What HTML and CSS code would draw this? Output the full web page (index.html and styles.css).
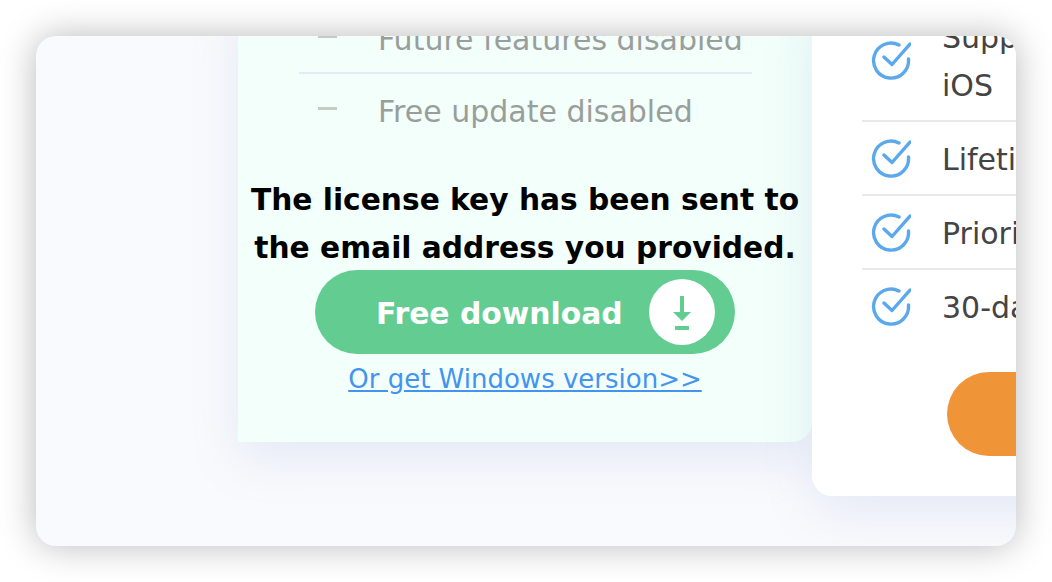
FILE: index.html
```html
<!DOCTYPE html>
<html lang="en">
<head>
<meta charset="utf-8">
<title>Free download</title>
<link rel="stylesheet" href="styles.css">
</head>
<body>
<main class="window">
  <div class="cards">
    <section class="card card-free">
      <ul class="list list-free">
        <li class="row-free"><span class="dash"></span><span>Future features disabled</span></li>
        <li class="row-free"><span class="dash"></span><span>Free update disabled</span></li>
      </ul>
      <p class="notice">The license key has been sent to<br>the email address you provided.</p>
      <a class="btn-download" href="#">
        <span>Free download</span>
        <svg class="download-icon" viewBox="0 0 66 66" aria-hidden="true">
          <circle cx="33" cy="33" r="33" fill="#fff"/>
          <rect x="31" y="17" width="4" height="19" fill="#63cd91"/>
          <polygon points="24,33 42,33 33,42" fill="#63cd91"/>
          <rect x="26" y="47" width="14" height="4" fill="#63cd91"/>
        </svg>
      </a>
      <a class="link-win" href="#">Or get Windows version&gt;&gt;</a>
    </section>
    <section class="card card-pro">
      <ul class="list">
        <li class="row-pro">
          <svg class="check" viewBox="0 0 40 44" aria-hidden="true"><path d="M28 7A17.5 17.5 0 1 0 37.5 21M13 19L21 26.5L39 6"/></svg>
          <span>Support macOS, iPadOS and<br>iOS</span>
        </li>
        <li class="row-pro">
          <svg class="check" viewBox="0 0 40 44" aria-hidden="true"><path d="M28 7A17.5 17.5 0 1 0 37.5 21M13 19L21 26.5L39 6"/></svg>
          <span>Lifetime free updates</span>
        </li>
        <li class="row-pro">
          <svg class="check" viewBox="0 0 40 44" aria-hidden="true"><path d="M28 7A17.5 17.5 0 1 0 37.5 21M13 19L21 26.5L39 6"/></svg>
          <span>Priority support</span>
        </li>
        <li class="row-pro">
          <svg class="check" viewBox="0 0 40 44" aria-hidden="true"><path d="M28 7A17.5 17.5 0 1 0 37.5 21M13 19L21 26.5L39 6"/></svg>
          <span>30-day money back</span>
        </li>
      </ul>
      <a class="btn-buy" href="#"></a>
    </section>
  </div>
</main>
</body>
</html>
```

FILE: styles.css
```css
* { box-sizing: border-box; }

html, body {
  margin: 0;
  height: 100%;
  background: #fff;
  overflow: hidden;
}

body {
  padding: 36px;
  font-family: "DejaVu Sans", sans-serif;
}

.window {
  width: 980px;
  height: 510px;
  padding-left: 202px;
  background: #f9fafd;
  border-radius: 20px;
  overflow: hidden;
  box-shadow: 0 0 36px rgba(0, 0, 0, 0.28);
}

.cards {
  display: flex;
  align-items: flex-start;
  width: 1150px;
  margin-top: -36px;
}

.card {
  width: 574px;
  flex: none;
  box-shadow: 0 16px 50px rgba(120, 145, 205, 0.16);
}

.card-free {
  position: relative;
  z-index: 0;
  height: 442px;
  padding: 0 60px 0 61px;
  background: #f2fffa;
  border-radius: 0 0 20px 0;
  text-align: center;
}

.card-pro {
  position: relative;
  z-index: 1;
  height: 496px;
  padding: 0 0 40px 50px;
  background: #fff;
  border-radius: 0 0 20px 20px;
}

.list {
  margin: 0;
  padding: 0;
  list-style: none;
}

.row-free {
  display: flex;
  align-items: center;
  height: 74px;
  font-size: 30px;
  color: #9a9e9b;
  text-align: left;
}

.row-free:first-child {
  padding-top: 6px;
  border-bottom: 2px solid #e6eaf3;
}

.dash {
  flex: none;
  width: 19px;
  height: 3px;
  margin: -6px 41px 0 19px;
  background: #c8cac8;
}

.notice {
  width: 574px;
  margin: 28px 0 0 -61px;
  font-size: 29.7px;
  font-weight: 700;
  line-height: 48px;
  color: #000;
  white-space: nowrap;
}

.btn-download {
  display: flex;
  align-items: center;
  justify-content: space-between;
  width: 420px;
  height: 84px;
  margin: -2px 0 0 16px;
  padding: 0 20px 0 61px;
  background: #63cd91;
  border-radius: 42px;
  font-size: 29.8px;
  font-weight: 700;
  color: #fff;
  text-decoration: none;
}

.btn-download span {
  padding-top: 2px;
}

.download-icon {
  width: 66px;
  height: 66px;
}

.link-win {
  display: block;
  margin: 7px 0 0 -1px;
  font-size: 26px;
  line-height: 36px;
  color: #4394ee;
}

.row-pro {
  display: flex;
  align-items: center;
  width: 560px;
  padding: 14px 0 10px;
  border-bottom: 2px solid #e8e9ef;
  font-size: 30px;
  line-height: 48px;
  color: #444;
}

.row-pro:last-child {
  border-bottom: 0;
}

.check {
  flex: none;
  width: 40px;
  height: 44px;
  margin: -4px 31px 0 9px;
  fill: none;
  stroke: #5ba9ec;
  stroke-width: 3.4;
  stroke-linecap: round;
  stroke-linejoin: round;
}

.btn-buy {
  display: block;
  width: 420px;
  height: 84px;
  margin: 30px 0 0 85px;
  background: #f09537;
  border-radius: 42px;
}
```
